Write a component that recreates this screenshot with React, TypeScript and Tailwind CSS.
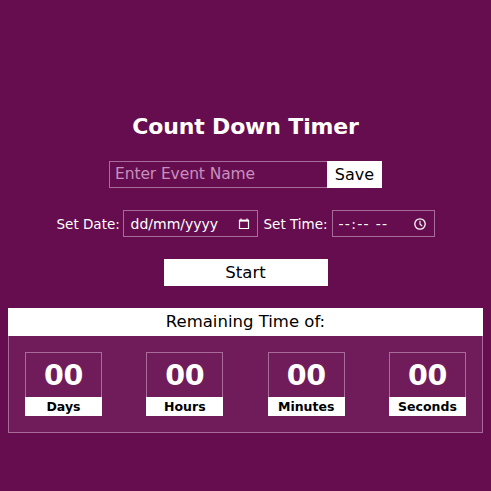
const units = ["Days", "Hours", "Minutes", "Seconds"];

function CalendarIcon() {
  return (
    <svg className="h-3 w-3 shrink-0" viewBox="0 0 12 12" fill="none" stroke="white">
      <path d="M1.5 2.5h9v8h-9z" strokeWidth="1.2" />
      <path d="M1 2.6h10" strokeWidth="2" />
      <path d="M3 .5v2M9 .5v2" strokeWidth="1.2" />
    </svg>
  );
}

function ClockIcon() {
  return (
    <svg className="size-3 shrink-0" viewBox="0 0 12 12" fill="none" stroke="white">
      <circle cx="6" cy="6" r="5.2" strokeWidth="1.3" />
      <path d="M6 2.7v3.5l2.2 1.8" strokeWidth="1.1" />
    </svg>
  );
}

export default function App() {
  return (
    <main className="flex h-[491px] w-[491px] flex-col items-center overflow-hidden bg-[#660d4f] pt-[113px] font-['DejaVu_Sans',sans-serif] text-white">
      <h1 className="h-7 whitespace-nowrap text-[22px] leading-[28px] font-bold tracking-[-0.15px]">Count Down Timer</h1>

      <div className="mt-5 flex h-[27px] w-[273px]">
        <div className="flex w-[218px] items-center whitespace-nowrap border border-r-0 border-[#a96b99] pl-[5px] text-[15.5px] tracking-[-0.1px] text-[#c88fbc]">
          Enter Event Name
        </div>
        <button className="w-[55px] bg-white text-[16px] leading-7 text-black">Save</button>
      </div>

      <div className="mt-[22px] flex h-[27px] w-[378px] items-center whitespace-nowrap text-[13.5px]">
        <span className="w-[66px] pt-px">Set Date:</span>
        <div className="flex h-[27px] w-[135px] items-center justify-between border border-[#a96b99] pr-[7px] pl-[7px] text-[14px] leading-6">
          <span className="pt-px">dd/mm/yyyy</span>
          <CalendarIcon />
        </div>
        <span className="w-[73px] pt-px pl-[6px]">Set Time:</span>
        <div className="ml-px flex h-[27px] w-[103px] items-center justify-between border border-[#a96b99] pr-[8px] pl-[6px] text-[14px]">
          <span className="pt-px tracking-[1.3px]">--:-- --</span>
          <ClockIcon />
        </div>
      </div>

      <button className="mt-[22px] h-[27px] w-[164px] bg-white text-[16.5px] leading-[27px] text-black">Start</button>

      <section className="mt-[22px] h-[125px] w-[475px]">
        <h2 className="h-7 bg-white text-center text-[16.5px] leading-7 text-black">Remaining Time of:</h2>
        <div className="flex h-[97px] justify-between border border-t-0 border-[#a96b99] bg-[#701c5a] px-4 pt-4">
          {units.map((unit) => (
            <div key={unit} className="h-[64px] w-[77px] border border-[#a96b99] text-center font-bold">
              <div className="h-11 text-[28.5px] leading-[46px] tracking-[-0.3px]">00</div>
              <div className="-mx-px h-[19px] bg-white text-[12.5px] leading-5 text-black">{unit}</div>
            </div>
          ))}
        </div>
      </section>
    </main>
  );
}
